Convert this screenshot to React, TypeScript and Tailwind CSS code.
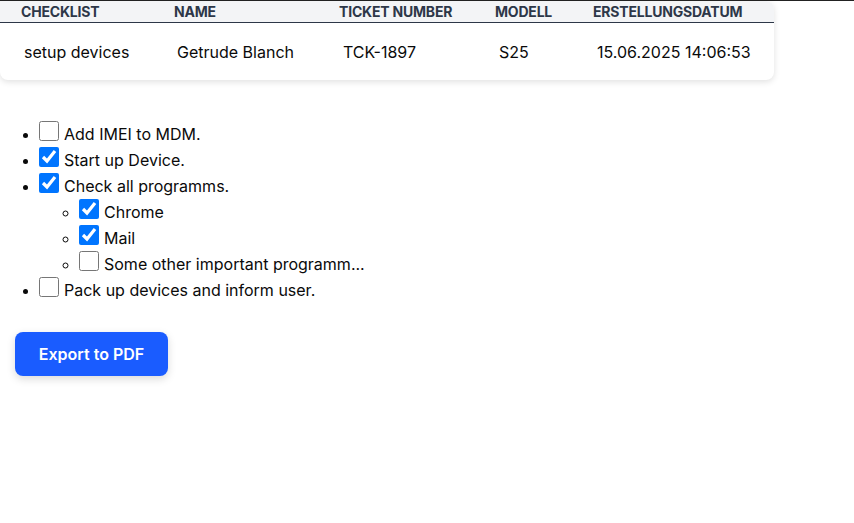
import { useState } from 'react'

type Item = { id: string; label: string; done: boolean; children?: Item[] }

const initialItems: Item[] = [
  { id: 'imei', label: 'Add IMEI to MDM.', done: false },
  { id: 'start', label: 'Start up Device.', done: true },
  {
    id: 'programs',
    label: 'Check all programms.',
    done: true,
    children: [
      { id: 'chrome', label: 'Chrome', done: true },
      { id: 'mail', label: 'Mail', done: true },
      { id: 'other', label: 'Some other important programm...', done: false },
    ],
  },
  { id: 'pack', label: 'Pack up devices and inform user.', done: false },
]

const columns = ['Checklist', 'Name', 'Ticket Number', 'Modell', 'Erstellungsdatum']
const row = ['setup devices', 'Getrude Blanch', 'TCK-1897', 'S25', '15.06.2025 14:06:53']

function CheckItem({ item, onToggle }: { item: Item; onToggle: (id: string) => void }) {
  return (
    <li className="leading-[26px]">
      <label>
        <input
          type="checkbox"
          checked={item.done}
          onChange={() => onToggle(item.id)}
          className="m-0 mr-[5px] ml-[-1px] h-5 w-5 align-[-1px]"
        />
        {item.label}
      </label>
      {item.children && (
        <ul className="list-[circle] pl-10">
          {item.children.map((child) => (
            <CheckItem key={child.id} item={child} onToggle={onToggle} />
          ))}
        </ul>
      )}
    </li>
  )
}

export default function App() {
  const [items, setItems] = useState(initialItems)

  const toggle = (id: string) => {
    const walk = (list: Item[]): Item[] =>
      list.map((i) => ({
        ...i,
        done: i.id === id ? !i.done : i.done,
        children: i.children ? walk(i.children) : undefined,
      }))
    setItems(walk(items))
  }

  return (
    <div
      className="min-h-[523px] border-t border-[#222] bg-white text-[16px] text-[#0a0a0a]"
      style={{ fontFamily: 'Inter, "Noto Sans", sans-serif' }}
    >
      <div className="w-[774px] overflow-hidden rounded-b-lg rounded-tr-lg bg-white shadow-[0_2px_6px_rgba(0,0,0,0.12)]">
        <div className="grid grid-cols-[153px_165px_156px_98px_1fr] border-b border-[#2d3748] bg-[#f3f4f6] pl-[21px] text-[14px] leading-[21px] font-bold tracking-[-0.2px] text-[#2d3748] uppercase">
          {columns.map((c) => (
            <div key={c}>{c}</div>
          ))}
        </div>
        <div className="grid grid-cols-[153px_166px_156px_98px_1fr] pt-[17px] pb-4 pl-[24px] leading-6">
          {row.map((c) => (
            <div key={c}>{c}</div>
          ))}
        </div>
      </div>

      <ul className="mt-[41px] list-disc pl-10">
        {items.map((item) => (
          <CheckItem key={item.id} item={item} onToggle={toggle} />
        ))}
      </ul>

      <button className="mt-[29px] ml-[15px] h-11 w-[153px] rounded-lg bg-[#1a5cff] font-semibold text-white shadow-[0_3px_8px_rgba(0,0,0,0.15)]">
        Export to PDF
      </button>
    </div>
  )
}
